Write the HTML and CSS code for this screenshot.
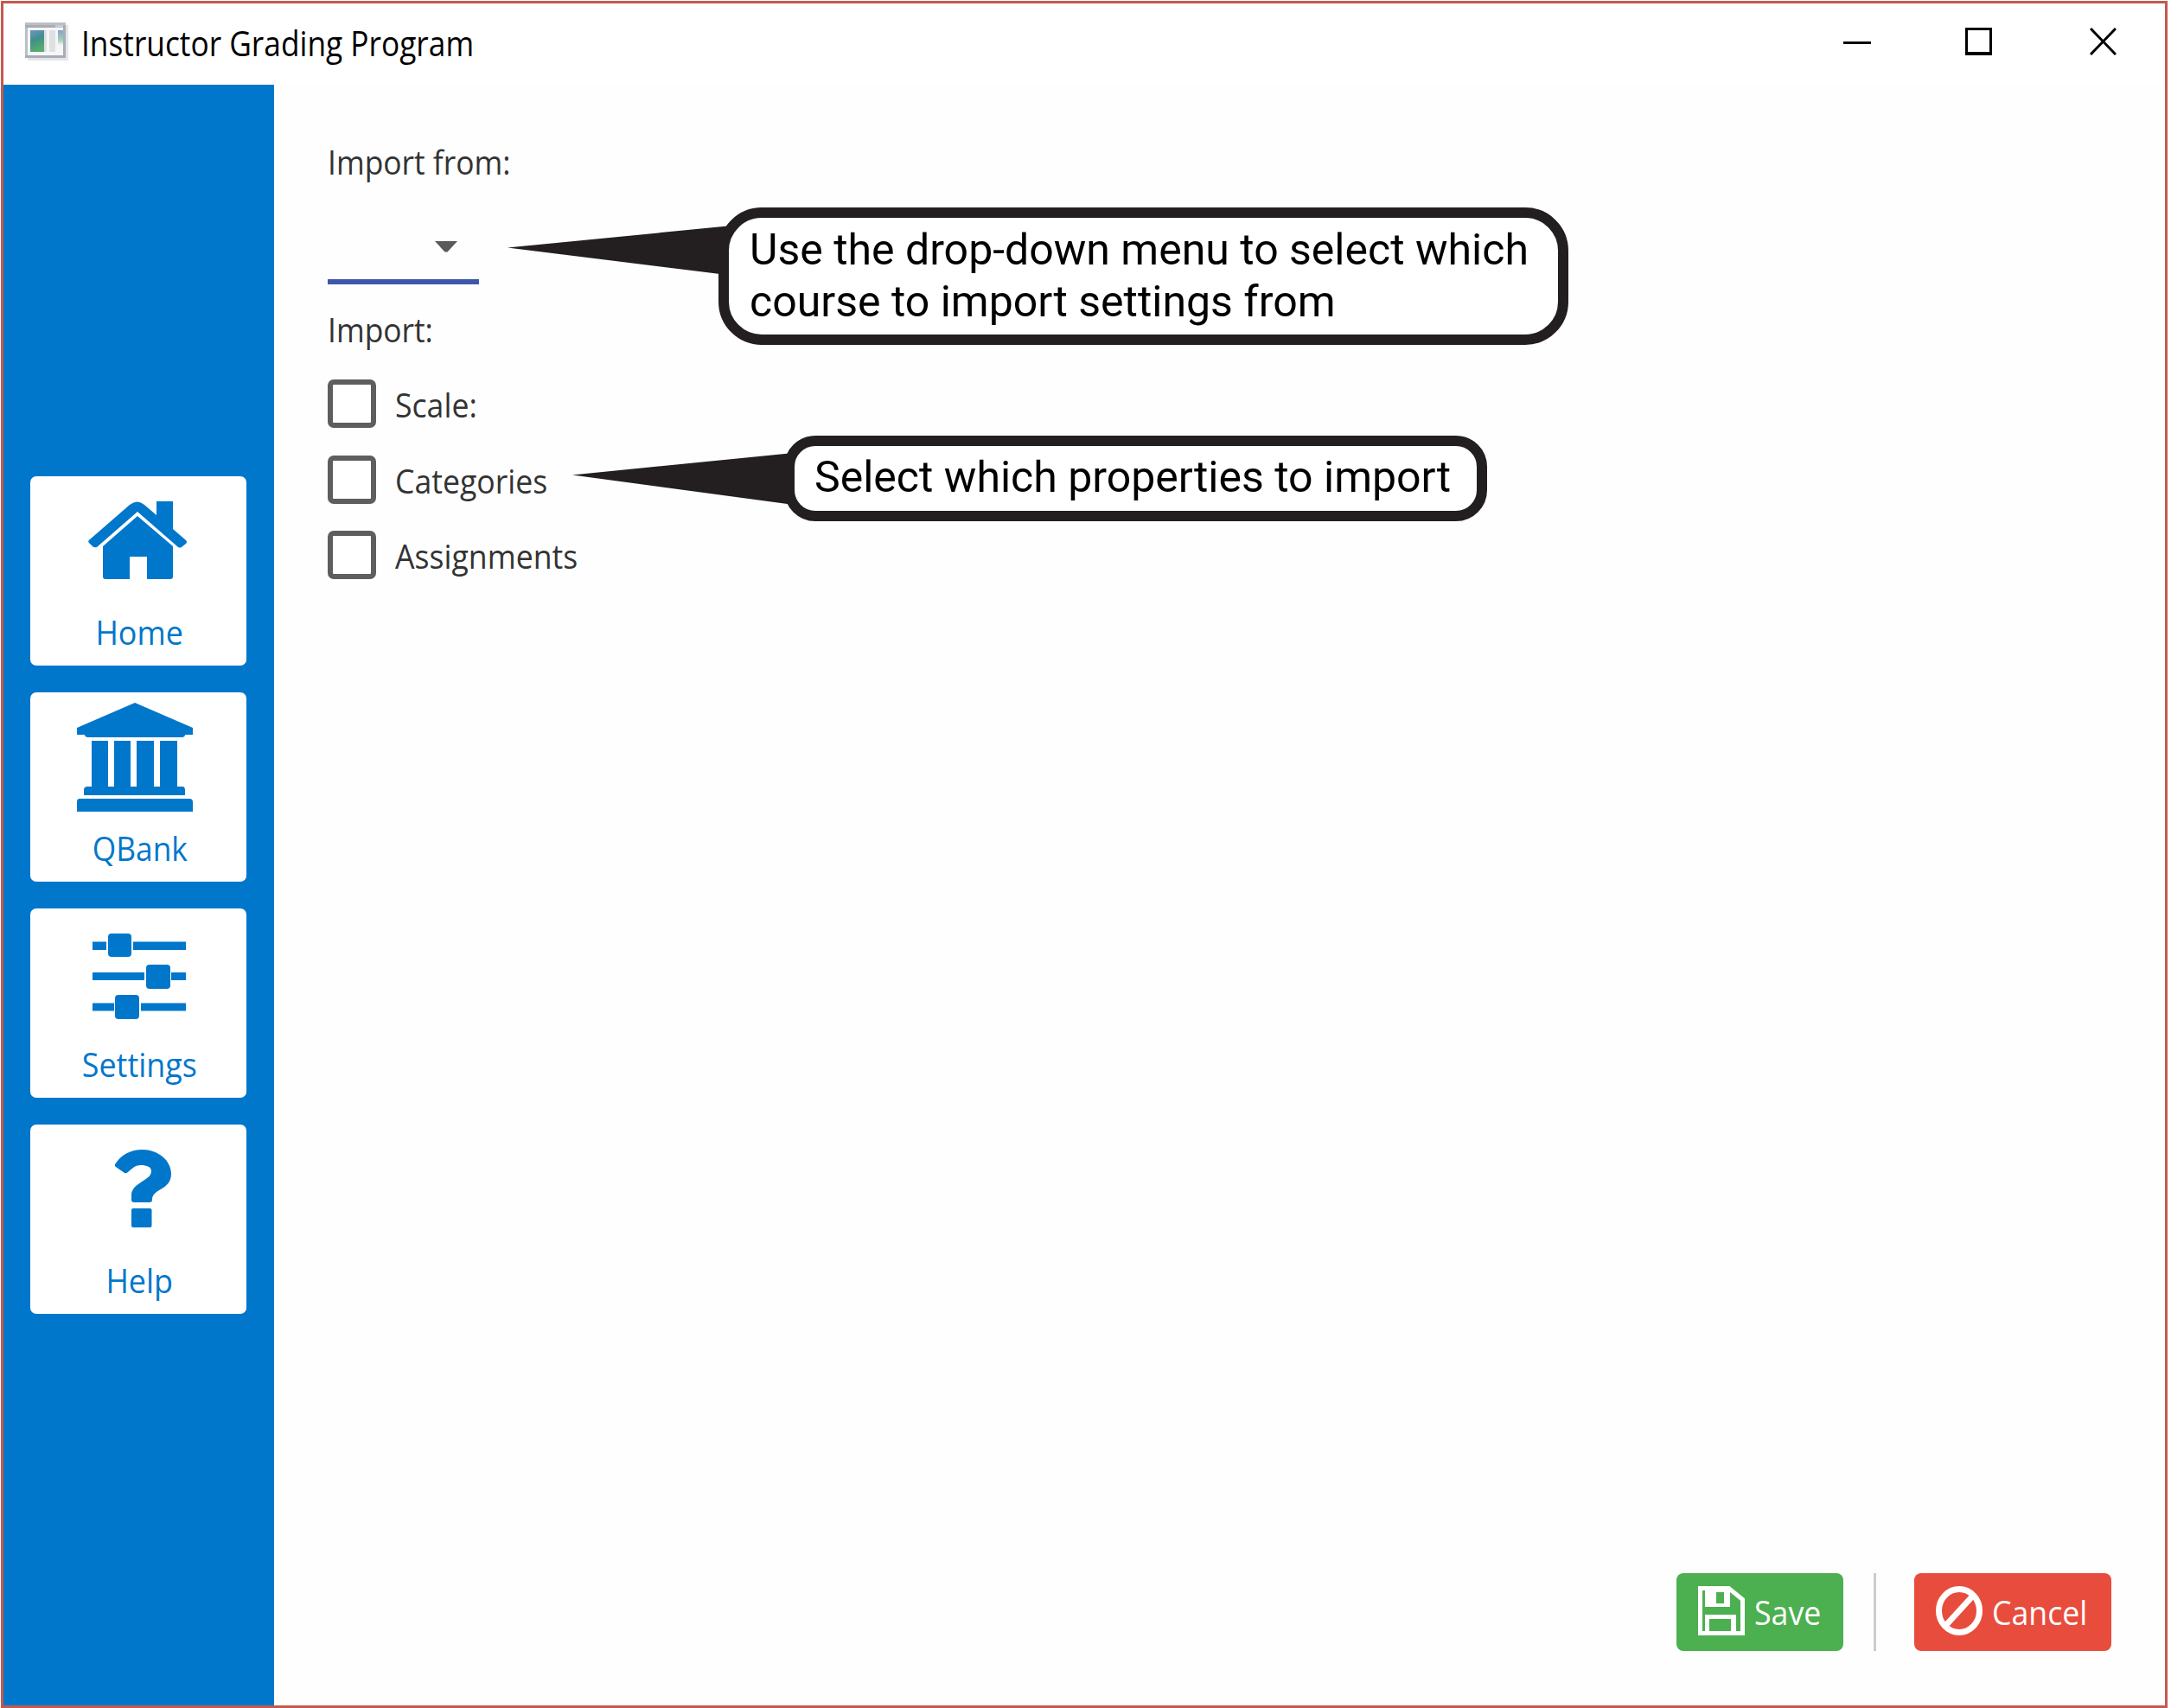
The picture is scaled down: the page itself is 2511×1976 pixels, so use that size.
FILE: index.html
```html
<!DOCTYPE html>
<html lang="en">
<head>
<meta charset="utf-8">
<title>Instructor Grading Program</title>
<link rel="stylesheet" href="styles.css">
</head>
<body>
<div class="window">
  <header class="titlebar">
    <svg class="app-icon" width="50" height="44" viewBox="0 0 50 44">
      <defs>
        <linearGradient id="pane" x1="0" y1="0" x2="0.3" y2="1"><stop offset="0" stop-color="#6f93c8"/><stop offset=".5" stop-color="#3f8f8c"/><stop offset="1" stop-color="#58ab6c"/></linearGradient>
        <linearGradient id="sliver" x1="0" y1="0" x2="0" y2="1"><stop offset="0" stop-color="#84a0cc"/><stop offset=".7" stop-color="#a9d3b4"/><stop offset="1" stop-color="#f2f4f1"/></linearGradient>
      </defs>
      <path fill="#e4e5e8" d="M3 3h47v41H3z"/>
      <path fill="#bcc0c4" d="M0 0h47v41H0z"/>
      <path fill="#a8adb5" d="M0 3h47v3H0zM0 38h47v3H0zM44 3h3v38h-3z"/>
      <path fill="#f5f6f8" d="M3 6h41v32H3z"/>
      <path fill="#c6cad8" d="M35 3h9v3h-9z"/>
      <path fill="url(#pane)" d="M6 9h16v25H6z"/>
      <path fill="#dfe0e2" d="M22 9h3v25h-3zM28 9h7v25h-7z"/>
      <path fill="url(#sliver)" d="M38 9h6v17h-6z"/>
    </svg>
    <h1 class="title">Instructor Grading Program</h1>
    <div class="controls">
      <svg width="32" height="32" viewBox="0 0 32 32"><path d="M0 16h32v3H0z"/></svg>
      <svg width="31" height="32" viewBox="0 0 31 32"><path fill-rule="evenodd" d="M0 0h31v32H0zM3 3v25h25V3z"/></svg>
      <svg width="31" height="32" viewBox="0 0 31 32"><path fill="none" stroke="#000" stroke-width="3" d="M1 1l29 30M30 1L1 31"/></svg>
    </div>
  </header>
  <div class="body">
    <nav class="sidebar">
      <a class="card">
        <svg class="card-icon" width="250" height="150" viewBox="35 551 250 150">
          <path d="M104 624l46-40q9-7 17 0l14 12v-16h19v32l15 13q2 2 0 4l-5 4q-2 1-4 0l-47-41-47 41q-3 1-5-1l-4-4q-2-2 1-4z"/>
          <path d="M119 632l40-35 41 35v35q0 3-3 3h-27v-26h-20v26h-28q-3 0-3-3z"/>
        </svg>
        <span class="card-label">Home</span>
      </a>
      <a class="card">
        <svg class="card-icon" width="250" height="150" viewBox="35 801 250 150">
          <path d="M89 842v8h9q0 3 4 3h108q4 0 4-3h9v-8l-67-29z"/>
          <path d="M106 857h19v53h7v-53h19v53h7v-53h20v53h7v-53h20v53h6q3 0 3 4v6H97v-6q0-4 4-4h5z"/>
          <path d="M92 924h127q4 0 4 4v11H89v-11q0-4 3-4z"/>
        </svg>
        <span class="card-label qbank">QBank</span>
      </a>
      <a class="card">
        <svg class="card-icon" width="250" height="150" viewBox="35 1051 250 150">
          <path d="M107 1089.500h16v9.500h-16zM154 1089.500h61v9.500h-61zM107 1125h60v9h-60zM198 1125h17v9h-17zM107 1160.500h25v9h-25zM163 1160.500h52v9h-52z"/>
          <rect x="125" y="1080" width="27" height="27" rx="4"/>
          <rect x="169" y="1116" width="28" height="28" rx="4"/>
          <rect x="133" y="1151" width="28" height="28" rx="4"/>
        </svg>
        <span class="card-label">Settings</span>
      </a>
      <a class="card">
        <svg class="card-icon" width="250" height="150" viewBox="35 1301 250 150">
          <path d="M133 1347q11-17 32-17c17 0 33 12 33 28 0 19-22 17-22 30q0 3-3 3h-18q-3 0-3-3v-5c0-15 23-17 23-28 0-5-5-7-12-7-8 0-11 5-15 8q-2 2-4 1l-10-7q-2-1-1-3z"/>
          <rect x="152" y="1398" width="23.500" height="22" rx="2"/>
        </svg>
        <span class="card-label">Help</span>
      </a>
    </nav>
    <main class="content">
      <p class="field-label">Import from:</p>
      <div class="select"><svg width="26" height="13" viewBox="0 0 26 13"><path d="M0 0h26L14.500 12.500h-3z"/></svg></div>
      <p class="field-label">Import:</p>
      <div class="checks">
        <label class="check"><i class="box"></i><span class="check-label">Scale:</span></label>
        <label class="check"><i class="box"></i><span class="check-label">Categories</span></label>
        <label class="check"><i class="box"></i><span class="check-label">Assignments</span></label>
      </div>
      <footer class="actions">
        <button class="btn save">
          <svg width="54" height="57" viewBox="0 0 54 57">
            <path fill="none" stroke="#fff" stroke-width="5" d="M2.500 2.500h33l16 13v39h-49z"/>
            <path fill="#fff" fill-rule="evenodd" d="M8 4h29v20H8zM21 7v13h9V7zM8 33h36v21H8zM13 38v14h25V38z"/>
          </svg>
          <span>Save</span>
        </button>
        <i class="divider"></i>
        <button class="btn cancel">
          <svg width="54" height="57" viewBox="0 0 54 57">
            <ellipse cx="27" cy="28.500" rx="23.500" ry="25" fill="none" stroke="#fff" stroke-width="7"/>
            <path stroke="#fff" stroke-width="7" d="M11 46L43 11"/>
          </svg>
          <span>Cancel</span>
        </button>
      </footer>
    </main>
  </div>
</div>
<aside class="callout callout-course">
  <svg class="pointer" width="270" height="60" viewBox="0 0 270 60"><path d="M0 26.500L270 0v60z"/></svg>
  <p class="bubble">Use the drop-down menu to select which<br>course to import settings from</p>
</aside>
<aside class="callout callout-props">
  <svg class="pointer" width="256" height="60" viewBox="0 0 256 60"><path d="M0 25.500L256 0v60z"/></svg>
  <p class="bubble">Select which properties to import</p>
</aside>
</body>
</html>
```
FILE: styles.css
```css
* { box-sizing: border-box; }
body { margin: 0; width: 2511px; height: 1976px; overflow: hidden; background: #fff; font-family: "Open Sans", "Noto Sans", sans-serif; font-size: 39px; line-height: 54px; color: #333; }
svg { display: block; flex: none; }
p, h1 { margin: 0; font: inherit; }
span { white-space: nowrap; }
.window { width: 2506px; height: 1975px; margin: 1px 0 0 1px; border: 3px solid #c4594d; background: #fefefe; display: flex; flex-direction: column; }
.titlebar { height: 94px; flex: none; display: flex; align-items: flex-start; padding: 22px 56px 0 25px; color: #000; background: #fff; }
.title { margin: -3px 0 0 15px; font-size: 40px; transform: scaleX(.882); transform-origin: left; }
.controls { margin: 6px 0 0 auto; display: flex; }
.controls svg:nth-child(2) { margin-left: 109px; }
.controls svg:nth-child(3) { margin-left: 113px; }
.body { flex: 1; display: flex; min-height: 0; }
.sidebar { width: 313px; background: #0077cb; padding: 453px 31px 0; display: flex; flex-direction: column; gap: 31px; flex: none; }
.card { width: 250px; height: 219px; background: #fff; border-radius: 7px; display: flex; flex-direction: column; align-items: center; color: #0077cb; }
.card-icon { fill: #0077cb; }
.card-label { margin: 3px 0 0 3px; transform: scaleX(.92); }
.qbank { transform: scaleX(.905); }
.content { flex: 1; padding: 62px 62px 63px 62px; display: flex; flex-direction: column; }
.field-label { transform: scaleX(.907); transform-origin: left; }
.select { width: 175px; height: 66px; margin: 49px 0 25px; border-bottom: 6px solid #3f57a9; padding: 16px 25px 0 0; display: flex; justify-content: flex-end; fill: #5a5a5a; }
.checks { display: flex; flex-direction: column; gap: 31px; margin-top: 31px; }
.check { display: flex; height: 56.500px; gap: 22px; }
.check-label { margin-top: 2px; transform: scaleX(.914); transform-origin: left; }
.box { width: 56px; height: 56px; border: 6px solid #5e5e5e; border-radius: 7px; background: #fff; }
.actions { display: flex; margin: auto 0 0; justify-content: flex-end; align-items: stretch; height: 90px; }
.btn { border: 0; border-radius: 8px; display: flex; align-items: flex-start; font: inherit; color: #fff; padding: 15px 0 0 25px; height: 90px; }
.btn span { margin: 3px 0 0 11px; transform: scaleX(.915); transform-origin: left; }
.save { width: 193px; background: #4caf50; }
.cancel { width: 228px; background: #e84c3d; }
.divider { width: 3px; margin: 0 44px 0 35px; background: #ccc; }
.callout { position: absolute; font-family: Roboto, sans-serif; font-size: 50px; line-height: 60px; color: #000; white-space: nowrap; }
.pointer { position: absolute; fill: #231f20; }
.bubble { position: relative; border: 12px solid #231f20; background: #fff; }
.callout-course { left: 831px; top: 240px; }
.callout-course .bubble { width: 983px; height: 159px; border-radius: 50px; padding: 7px 0 0 24px; }
.callout-course .pointer { left: -244px; top: 20px; }
.callout-props { left: 907px; top: 504px; }
.callout-props .bubble { width: 813px; height: 99px; border-radius: 36px; padding: 6px 0 0 23px; }
.callout-props .pointer { left: -245px; top: 20px; }
```
